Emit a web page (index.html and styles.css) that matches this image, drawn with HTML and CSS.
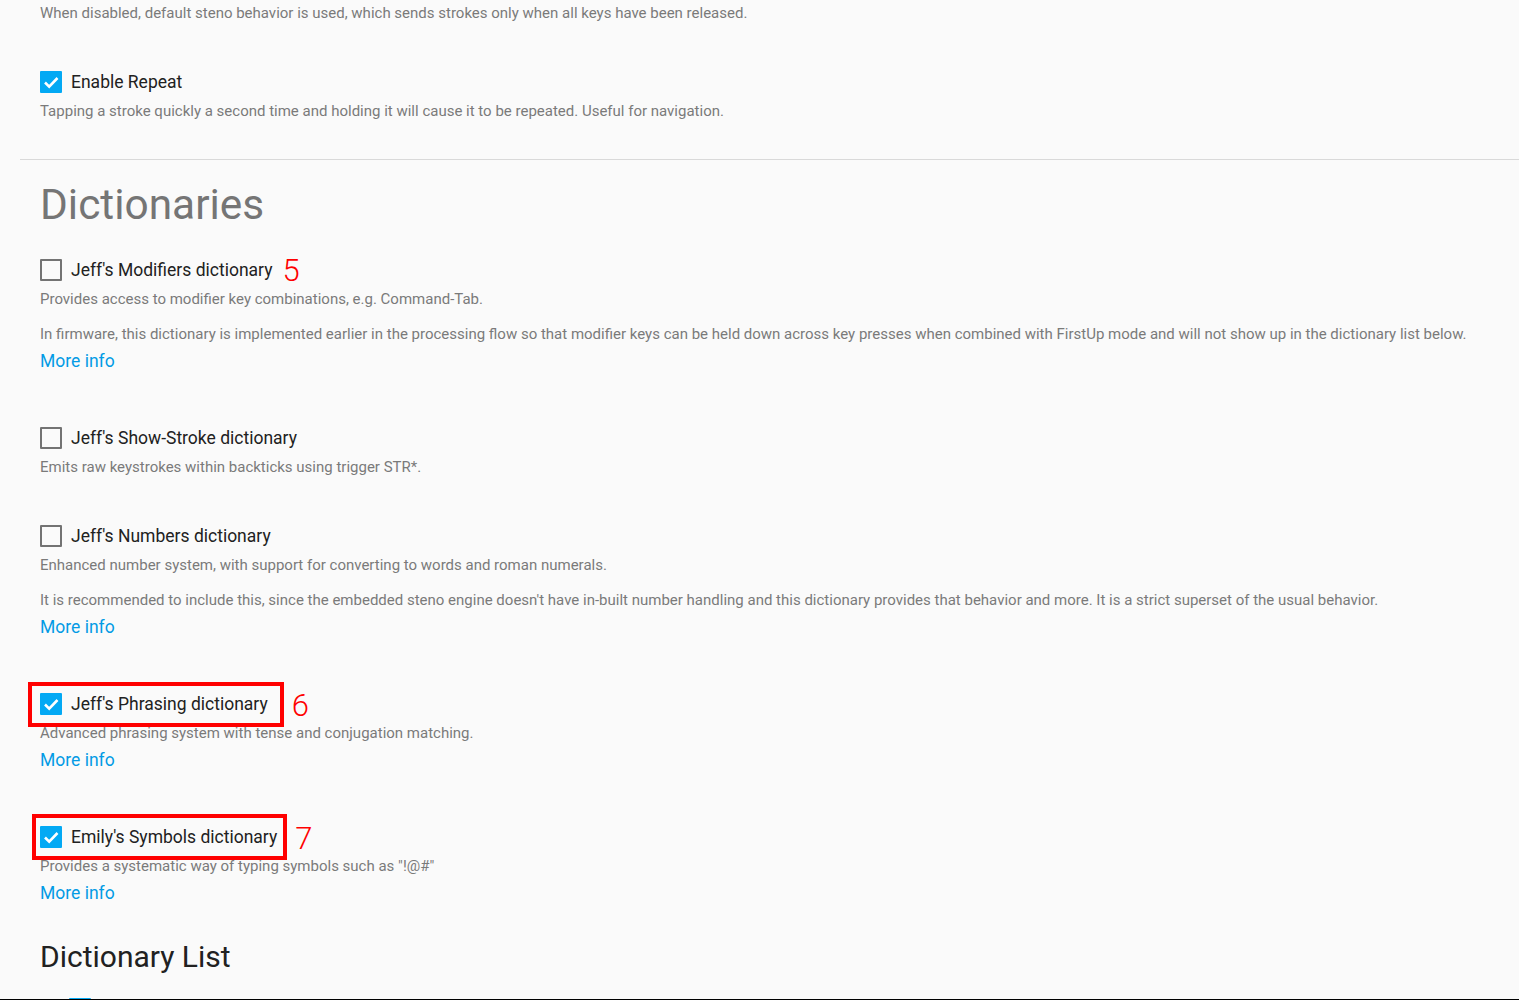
FILE: index.html
```html
<!DOCTYPE html>
<html lang="en">
<head>
<meta charset="utf-8">
<title>Settings</title>
<link rel="stylesheet" href="styles.css">
</head>
<body>
<div class="page">
  <div class="section">
    <p class="desc top">When disabled, default steno behavior is used, which sends strokes only when all keys have been released.</p>
    <div class="item">
      <div class="row">
        <span class="cb on"><svg viewBox="0 0 22 22" width="22" height="22"><path d="M5 11.5 L9.2 15.6 L17.5 7" fill="none" stroke="#fff" stroke-width="2.6"/></svg></span>
        <span class="label">Enable Repeat</span>
      </div>
      <p class="desc">Tapping a stroke quickly a second time and holding it will cause it to be repeated. Useful for navigation.</p>
    </div>
  </div>
  <hr class="rule">
  <div class="section">
    <h1 class="display">Dictionaries</h1>
    <div class="dicts">
      <div class="item">
        <div class="row">
          <span class="cb"></span>
          <span class="label">Jeff's Modifiers dictionary</span>
          <span class="num n5">5</span>
        </div>
        <p class="desc">Provides access to modifier key combinations, e.g. Command-Tab.</p>
        <p class="desc next">In firmware, this dictionary is implemented earlier in the processing flow so that modifier keys can be held down across key presses when combined with FirstUp mode and will not show up in the dictionary list below.</p>
        <a class="more" href="#">More info</a>
      </div>
      <div class="item">
        <div class="row">
          <span class="cb"></span>
          <span class="label">Jeff's Show-Stroke dictionary</span>
        </div>
        <p class="desc">Emits raw keystrokes within backticks using trigger STR*.</p>
      </div>
      <div class="item">
        <div class="row">
          <span class="cb"></span>
          <span class="label">Jeff's Numbers dictionary</span>
        </div>
        <p class="desc">Enhanced number system, with support for converting to words and roman numerals.</p>
        <p class="desc next">It is recommended to include this, since the embedded steno engine doesn't have in-built number handling and this dictionary provides that behavior and more. It is a strict superset of the usual behavior.</p>
        <a class="more" href="#">More info</a>
      </div>
      <div class="item">
        <div class="row">
          <span class="boxed b6">
            <span class="cb on"><svg viewBox="0 0 22 22" width="22" height="22"><path d="M5 11.5 L9.2 15.6 L17.5 7" fill="none" stroke="#fff" stroke-width="2.6"/></svg></span>
            <span class="label">Jeff's Phrasing dictionary</span>
          </span>
          <span class="num n6">6</span>
        </div>
        <p class="desc">Advanced phrasing system with tense and conjugation matching.</p>
        <a class="more" href="#">More info</a>
      </div>
      <div class="item">
        <div class="row">
          <span class="boxed b7">
            <span class="cb on"><svg viewBox="0 0 22 22" width="22" height="22"><path d="M5 11.5 L9.2 15.6 L17.5 7" fill="none" stroke="#fff" stroke-width="2.6"/></svg></span>
            <span class="label">Emily's Symbols dictionary</span>
          </span>
          <span class="num n7">7</span>
        </div>
        <p class="desc">Provides a systematic way of typing symbols such as "!@#"</p>
        <a class="more" href="#">More info</a>
      </div>
    </div>
    <h2 class="headline">Dictionary List</h2>
    <div class="list">
      <span class="cb on list-cb"></span>
    </div>
  </div>
</div>
</body>
</html>
```

FILE: styles.css
```css
html, body {
  margin: 0;
  padding: 0;
  background: #fafafa;
}
body {
  font-family: Roboto, "Noto Sans", Arial, sans-serif;
  color: #212121;
}
.page {
  height: 999px;
  overflow: hidden;
  border-bottom: 1px solid #000;
  padding-left: 20px;
}
.section {
  padding: 0 20px;
}
.desc {
  margin: 7px 0 0;
  font-size: 15px;
  line-height: 20px;
  font-weight: 400;
  color: #7a7a7a;
}
.desc.top {
  margin-top: 3px;
}
.desc.next {
  margin-top: 15px;
}
.item {
  margin-top: 47px;
  display: flex;
  flex-direction: column;
  align-items: flex-start;
}
.dicts .item:first-child {
  margin-top: 29px;
}
.item:has(.more) + .item {
  margin-top: 53px;
}
.row {
  display: flex;
  align-items: center;
  height: 24px;
}
.cb {
  width: 22px;
  height: 22px;
  box-sizing: border-box;
  border: 2.5px solid #737373;
  border-radius: 1px;
  flex: none;
  display: block;
}
.cb.on {
  border: none;
  background: #03a9f4;
}
.cb svg {
  display: block;
}
.label {
  margin-left: 9px;
  font-size: 17.5px;
  line-height: 24px;
  font-weight: 400;
  color: #212121;
  white-space: nowrap;
}
.num {
  color: #ff0000;
  font-family: Roboto, Arial, sans-serif;
  font-weight: 300;
  font-size: 31px;
  line-height: 24px;
  position: relative;
  top: 1px;
}
.n5 { margin-left: 10px; }
.n6 { margin-left: 24px; top: 2px; }
.n7 { margin-left: 18px; top: 2px; }
.boxed {
  position: relative;
  display: flex;
  align-items: center;
}
.boxed::after {
  content: "";
  position: absolute;
  border: 4px solid #ff0000;
  pointer-events: none;
}
.b6::after {
  top: -10px; bottom: -11px; left: -12px; right: -16px;
}
.b7::after {
  top: -11px; bottom: -11px; left: -8px; right: -10px;
}
.more {
  margin-top: 5px;
  font-size: 17.5px;
  line-height: 24px;
  font-weight: 400;
  color: #039be5;
  text-decoration: none;
}
.rule {
  margin: 38px 0 0;
  border: none;
  height: 1px;
  background: #d9d9d9;
}
.display {
  margin: 21px 0 0;
  font-size: 42.4px;
  line-height: 48px;
  font-weight: 400;
  color: #757575;
}
.headline {
  margin: 34px 0 0;
  font-size: 30px;
  line-height: 36px;
  font-weight: 400;
  color: #212121;
}
.list {
  margin-top: 23px;
  padding-left: 29px;
}
```
